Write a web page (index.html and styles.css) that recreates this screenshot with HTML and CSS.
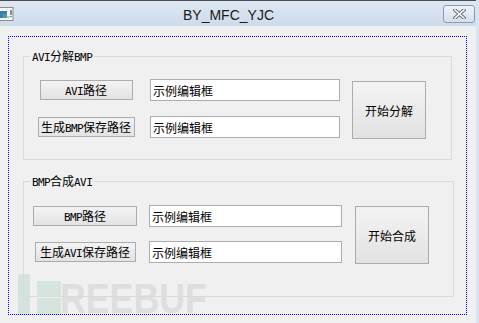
FILE: index.html
```html
<!DOCTYPE html>
<html lang="zh-CN">

<head>
  <meta charset="UTF-8">
  <title>BY_MFC_YJC</title>
  <link rel="stylesheet" href="styles.css">
</head>

<body>

  <div class="window">
    <header class="titlebar">
      <svg class="app-icon" width="14" height="14" viewBox="0 0 14 14">
        <rect x="-1" y="0.5" width="14" height="13" fill="#f4f6f8" stroke="#8c8c8c"/>
        <rect x="0" y="4" width="7" height="7" fill="#3b7fb6"/>
        <rect x="3" y="7" width="4" height="4" fill="#4aa48c"/>
        <rect x="7" y="9" width="3" height="2" fill="#c8c8c8"/>
        <rect x="10.5" y="3" width="1" height="5" fill="#222"/>
        <rect x="10.5" y="9" width="1" height="1" fill="#222"/>
      </svg>
      <span class="title">BY_MFC_YJC</span>
      <button class="close" title="Close">
        <svg width="13" height="10" viewBox="0 0 13 10">
          <path d="M2 1 L11 9 M11 1 L2 9" stroke="#5c6570" stroke-width="3.4" stroke-linecap="square"/>
          <path d="M2 1 L11 9 M11 1 L2 9" stroke="#fff" stroke-width="1.6" stroke-linecap="square"/>
        </svg>
      </button>
    </header>

    <main class="client">
      <div class="dialog">

        <fieldset class="group g1">
          <legend><span class="lat">AVI</span>分解<span class="lat">BMP</span></legend>
          <div class="group-body">
            <div class="rows">
              <button class="btn w93"><span class="lat">AVI</span>路径</button>
              <input class="edit" type="text" value="示例编辑框">
              <button class="btn w97">生成<span class="lat">BMP</span>保存路径</button>
              <input class="edit" type="text" value="示例编辑框">
            </div>
            <button class="big">开始分解</button>
          </div>
        </fieldset>

        <fieldset class="group g2">
          <legend><span class="lat">BMP</span>合成<span class="lat">AVI</span></legend>
          <div class="group-body">
            <div class="rows">
              <button class="btn w104"><span class="lat">BMP</span>路径</button>
              <input class="edit" type="text" value="示例编辑框">
              <button class="btn w101">生成<span class="lat">AVI</span>保存路径</button>
              <input class="edit" type="text" value="示例编辑框">
            </div>
            <button class="big">开始合成</button>
          </div>
        </fieldset>

      </div>

      <!-- site watermark over the bottom left corner -->
      <div class="watermark">
        <span class="wm-bar"></span>
        <span class="wm-arm top"></span>
        <span class="wm-arm mid"></span>
        <span class="wm-text">REEBUF</span>
      </div>
    </main>
  </div>

</body>

</html>
```

FILE: styles.css
```css
body {
  margin: 0;
  padding: 0;
  background: #f0f0f0;
  font-family: 'Noto Sans CJK SC', sans-serif;
  font-size: 12px;
  color: #000;
}

.window {
  width: 476px;
  height: 323px;
  border-right: 3px solid #d9e4f2;
  box-shadow: inset -1px 0 0 #b9c7da;
  display: flex;
  flex-direction: column;
}

/* title bar */

.titlebar {
  flex: none;
  height: 25px;
  border-top: 1px solid #4d4d4d;
  background: linear-gradient(#dde7f3, #cddbeb);
  display: flex;
  align-items: center;
}

.app-icon {
  flex: none;
  display: block;
}

.title {
  flex: 1;
  text-align: center;
  font-family: 'Liberation Sans', sans-serif;
  font-size: 14px;
  color: #1a1a1a;
  padding-top: 2px;
}

.close {
  flex: none;
  width: 32px;
  height: 18px;
  margin-right: 1px;
  padding: 0;
  border: 1px solid #8b9bb1;
  border-radius: 3px;
  background: linear-gradient(#eef3f9, #d5dfeb);
  display: flex;
  align-items: center;
  justify-content: center;
}

/* client area */

.client {
  position: relative;
  flex: 1;
  background: #f0f0f0;
  padding: 10px 0 0 8px;
}

.dialog {
  position: relative;
  z-index: 1;
  width: 457px;
  height: 277px;
  border: 1px dotted #0000ff;
  overflow: hidden;
}

.group {
  border: 1px solid #dadada;
  margin: 12px 14px 0 14px;
  padding: 16px 0 20px 0;
  min-width: 0;
}

.group legend {
  height: 14px;
  margin-left: 6px;
  padding: 0 2px;
  line-height: 14px;
}

.g2 {
  margin: 14px 12px 0 14px;
  padding: 17px 0 32px 0;
}

.lat {
  font-family: 'DejaVu Sans Mono', monospace;
  font-size: 11px;
  line-height: 0;
  letter-spacing: -0.6px;
}

.group-body {
  display: flex;
  align-items: flex-start;
}

.rows {
  display: grid;
  grid-template-columns: 124px 190px;
  grid-auto-rows: 22px;
  column-gap: 2px;
  row-gap: 15px;
  align-items: center;
}

.g2 .rows {
  grid-template-columns: 122px 193px;
  column-gap: 3px;
  row-gap: 14px;
}

.btn {
  justify-self: center;
  height: 20px;
  padding: 0;
  border: 1px solid #acacac;
  background: linear-gradient(#f3f3f3, #e3e3e3);
  font-family: 'Noto Sans CJK SC', sans-serif;
  font-size: 12px;
  line-height: 16px;
  color: #000;
  white-space: nowrap;
}

.w93 { width: 93px; }
.w97 { width: 97px; }
.w104 { width: 104px; }
.w101 { width: 101px; }

.edit {
  box-sizing: border-box;
  width: 100%;
  height: 22px;
  margin: 0;
  padding: 0 2px;
  border: 1px solid #abadb3;
  background: #fff;
  font-family: 'Noto Sans CJK SC', sans-serif;
  font-size: 12px;
  color: #000;
  outline: none;
}

.big {
  width: 74px;
  height: 58px;
  margin: 2px 0 0 12px;
  padding: 0;
  border: 1px solid #acacac;
  background: linear-gradient(#f3f3f3, #e2e2e2);
  font-family: 'Noto Sans CJK SC', sans-serif;
  font-size: 12px;
  color: #000;
}

.g2 .big {
  margin: 1px 0 0 13px;
}

/* watermark */

.watermark {
  position: absolute;
  left: 0;
  top: 248px;
  width: 220px;
  height: 41px;
  z-index: 0;
}

.wm-bar {
  position: absolute;
  left: 18px;
  top: 0;
  width: 12px;
  height: 41px;
  background: #d4e3dc;
}

.wm-arm {
  position: absolute;
  left: 37px;
  width: 24px;
  background: #d6e4de;
}

.wm-arm.top {
  top: 7px;
  height: 16px;
}

.wm-arm.mid {
  top: 24px;
  height: 17px;
}

.wm-text {
  position: absolute;
  left: 60px;
  top: 4px;
  font-family: 'Liberation Sans', sans-serif;
  font-weight: bold;
  font-size: 42px;
  line-height: 42px;
  color: #dedede;
  transform: scaleX(0.85);
  transform-origin: left top;
}
```
